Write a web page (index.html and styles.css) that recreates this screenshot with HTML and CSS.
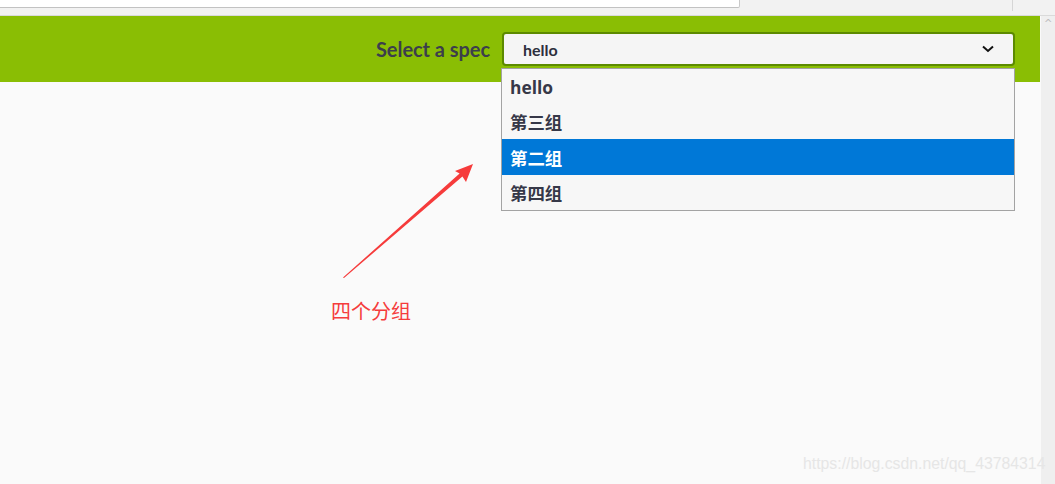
FILE: index.html
```html
<!DOCTYPE html>
<html lang="zh">
<head>
<meta charset="utf-8">
<title>Select a spec</title>
<link rel="stylesheet" href="styles.css">
</head>
<body>
<div class="chrome">
  <div class="urlbox"></div>
  <div class="chrome-fill"></div>
  <div class="chrome-sep"></div>
  <div class="chrome-end"></div>
</div>
<div class="window">
  <div class="page">
    <header class="topbar">
      <span class="label">Select a spec</span>
      <div class="select-wrap">
        <div class="select">
          <span class="value">hello</span>
          <svg class="chev" width="12" height="8" viewBox="0 0 12 8"><polyline points="1,1.5 6,6 11,1.5" fill="none" stroke="#111" stroke-width="2"/></svg>
        </div>
        <ul class="menu">
          <li class="opt opt-latin">hello</li>
          <li class="opt">第三组</li>
          <li class="opt active">第二组</li>
          <li class="opt">第四组</li>
        </ul>
      </div>
    </header>
    <main class="content"></main>
    <svg class="arrow" width="1055" height="484" viewBox="0 0 1055 484">
      <polygon points="343,277.5 459.6,173.4 455,171 473,164 466,182 462.4,176.6 344,278" fill="#f63b3b"/>
    </svg>
    <span class="note">四个分组</span>
  </div>
  <div class="scrollbar"><span class="sb-up">^</span></div>
  <span class="watermark">https://blog.csdn.net/qq_43784314</span>
</div>
</body>
</html>
```
FILE: styles.css
```css
html, body {
  margin: 0;
  padding: 0;
}
body {
  width: 1055px;
  height: 484px;
  overflow: hidden;
  background: #fafafa;
  font-family: "Lato", "Noto Sans CJK SC", sans-serif;
}
.chrome {
  height: 15px;
  background: #f2f2f2;
  border-bottom: 1px solid #dadada;
  display: flex;
  align-items: flex-start;
}
.urlbox {
  width: 739px;
  height: 7px;
  background: #ffffff;
  border-right: 1px solid #c9c9c9;
  border-bottom: 1px solid #c2c2c2;
  border-bottom-right-radius: 2px;
}
.chrome-fill {
  flex: 1;
}
.chrome-sep {
  width: 1px;
  height: 11px;
  background: #d6d6d6;
  margin-right: 42px;
}
.chrome-end {
  width: 0;
}
.window {
  position: relative;
  display: flex;
  height: 468px;
}
.page {
  flex: 1;
  display: flex;
  flex-direction: column;
}
.topbar {
  height: 66px;
  background: #8abe04;
  display: flex;
  justify-content: flex-end;
  align-items: flex-start;
  padding: 16px 25px 0 0;
  box-sizing: border-box;
  gap: 12px;
}
.label {
  font-family: "Lato", sans-serif;
  font-weight: 700;
  font-size: 20px;
  color: #3c3e4c;
  line-height: 34px;
  letter-spacing: -0.05px;
}
.select-wrap {
  position: relative;
  width: 513px;
}
.select {
  height: 34px;
  box-sizing: border-box;
  border: 2px solid #5c8a00;
  border-radius: 4px;
  background: #f5f5f5;
  display: flex;
  align-items: center;
  justify-content: space-between;
  padding: 0 19px 0 19px;
}
.value {
  font-family: "Lato", sans-serif;
  font-weight: 700;
  font-size: 16px;
  color: #2d2f3d;
  margin-top: 1px;
}
.chev {
  display: block;
  margin-top: -1px;
}
.menu {
  position: absolute;
  top: 36px;
  left: -1px;
  width: 514px;
  margin: 0;
  padding: 0;
  list-style: none;
  background: #f7f7f7;
  border: 1px solid #a3a3a3;
  box-sizing: border-box;
  z-index: 2;
}
.opt {
  height: 35px;
  display: flex;
  align-items: center;
  padding-left: 8px;
  font-family: "Open Sans", "Noto Sans CJK SC", sans-serif;
  font-weight: 700;
  font-size: 17.4px;
  color: #363848;
}
.opt-latin {
  padding-top: 0;
  box-sizing: border-box;
}
.opt.active {
  height: 36px;
  background: #0078d7;
  color: #ffffff;
}
.content {
  flex: 1;
  background: #fafafa;
}
.arrow {
  position: absolute;
  left: 0;
  top: -16px;
  pointer-events: none;
}
.note {
  position: absolute;
  left: 331px;
  top: 283px;
  font-family: "Noto Sans CJK SC", sans-serif;
  font-size: 20px;
  line-height: 24px;
  color: #f53c3c;
}
.scrollbar {
  width: 14px;
  margin-left: 1px;
  background: #efefef;
  position: relative;
}
.sb-up {
  position: absolute;
  left: 3px;
  top: 2px;
  font-family: "DejaVu Sans", sans-serif;
  font-size: 10px;
  color: #bdbdbd;
}
.watermark {
  position: absolute;
  left: 803px;
  top: 439px;
  font-family: "Liberation Sans", sans-serif;
  font-size: 15.8px;
  color: #e6e6e6;
  white-space: nowrap;
}
```
